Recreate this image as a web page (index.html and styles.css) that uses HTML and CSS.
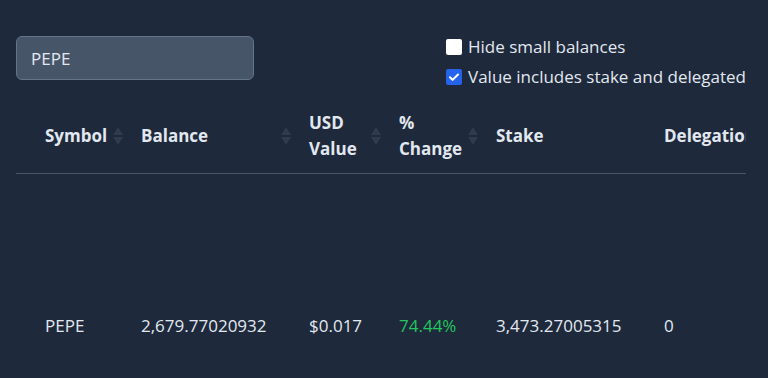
FILE: index.html
```html
<!DOCTYPE html>
<html lang="en">
<head>
<meta charset="UTF-8">
<meta name="viewport" content="width=device-width, initial-scale=1">
<title>Balances</title>
<link rel="stylesheet" href="styles.css">
</head>
<body>
<div class="container">

<div class="toolbar">
<input class="search" type="text" value="PEPE">
<div class="options">
<label class="option"><span class="box"></span>Hide small balances</label>
<label class="option"><span class="box checked"><svg viewBox="0 0 16 16" width="16" height="16"><path d="M4 8.3l2.6 2.6L12 5.5" fill="none" stroke="#fff" stroke-width="2" stroke-linecap="round" stroke-linejoin="round"/></svg></span>Value includes stake and delegated</label>
</div>
</div>

<div class="table-wrap">
<table class="balances">
<colgroup>
<col class="c-symbol"><col class="c-balance"><col class="c-usd"><col class="c-change"><col class="c-stake"><col class="c-deleg">
</colgroup>
<thead>
<tr>
<th class="first"><div class="th-inner"><span>Symbol</span><span class="sort"></span></div></th>
<th><div class="th-inner"><span>Balance</span><span class="sort"></span></div></th>
<th><div class="th-inner"><span>USD Value</span><span class="sort"></span></div></th>
<th><div class="th-inner"><span>% Change</span><span class="sort"></span></div></th>
<th><div class="th-inner"><span>Stake</span></div></th>
<th><div class="th-inner"><span>Delegations</span></div></th>
</tr>
</thead>
<tbody>
<tr>
<td class="first">PEPE</td>
<td>2,679.77020932</td>
<td>$0.017</td>
<td class="up">74.44%</td>
<td>3,473.27005315</td>
<td>0</td>
</tr>
</tbody>
</table>
</div>

</div>
</body>
</html>
```

FILE: styles.css
```css
body {
margin: 0;
background: #1e293b;
color: #e2e8f0;
font-family: 'Open Sans', sans-serif;
font-size: 17px;
}
.container {
padding: 0 22px 0 16px;
}
.toolbar {
display: flex;
justify-content: space-between;
align-items: flex-start;
padding-top: 32px;
}
.search {
margin-top: 4px;
width: 238px;
height: 44px;
box-sizing: border-box;
background: #475569;
border: 1px solid #64748b;
border-radius: 6px;
color: #e2e8f0;
font-family: inherit;
font-size: 17px;
padding: 0 14px;
outline: none;
}
.options {
display: flex;
flex-direction: column;
}
.option {
display: flex;
align-items: center;
gap: 6px;
height: 30px;
line-height: 30px;
}
.box {
width: 16px;
height: 16px;
background: #fff;
border-radius: 2px;
display: inline-block;
}
.box.checked {
background: #2563eb;
}
.box svg {
display: block;
}
.table-wrap {
margin-top: 7px;
overflow: hidden;
}
.balances {
width: 900px;
table-layout: fixed;
border-collapse: collapse;
}
.c-symbol {width: 125px;}
.c-balance {width: 168px;}
.c-usd {width: 90px;}
.c-change {width: 97px;}
.c-stake {width: 168px;}
.c-deleg {width: 252px;}
.balances th {
text-align: left;
font-weight: 700;
padding: 11px 0;
line-height: 26px;
border-bottom: 1px solid #475569;
vertical-align: middle;
}
.balances th.first, .balances td.first {
padding-left: 29px;
}
.th-inner {
display: flex;
align-items: center;
justify-content: space-between;
padding-right: 17px;
gap: 4px;
}
.sort {
flex: none;
width: 11px;
height: 18px;
display: flex;
flex-direction: column;
justify-content: space-between;
}
.sort::before, .sort::after {
content: '';
display: block;
width: 0;
height: 0;
border-left: 5.5px solid transparent;
border-right: 5.5px solid transparent;
}
.sort::before {
border-bottom: 8px solid #2f3b4e;
}
.sort::after {
border-top: 8px solid #2f3b4e;
}
.balances td {
height: 302px;
padding: 0;
vertical-align: middle;
white-space: nowrap;
}
.balances td.up {
color: #22c55e;
}
```
